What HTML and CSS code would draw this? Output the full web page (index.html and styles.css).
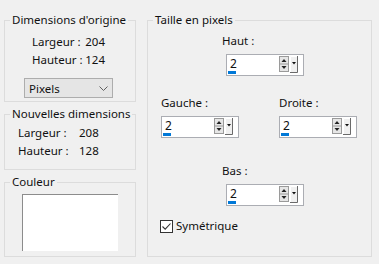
FILE: index.html
```html
<!DOCTYPE html>
<html lang="fr">
<head>
    <meta charset="UTF-8">
    <title>Ajouter des bordures</title>
    <link rel="stylesheet" href="styles.css">
</head>
<body>
    <div class="dialog">
        <div class="left">
            <fieldset class="group g-orig">
                <legend>Dimensions d'origine</legend>
                <div class="dim orig"><span>Largeur :</span><span>204</span></div>
                <div class="dim orig"><span>Hauteur :</span><span>124</span></div>
                <div class="combo">
                    <span>Pixels</span>
                    <svg width="9" height="5" viewBox="0 0 9 5"><path d="M0.5 0.5 L4.5 4.5 L8.5 0.5" fill="none" stroke="#606060" stroke-width="1"/></svg>
                </div>
            </fieldset>

            <fieldset class="group g-new">
                <legend>Nouvelles dimensions</legend>
                <div class="dim new"><span>Largeur :</span><span>208</span></div>
                <div class="dim new"><span>Hauteur :</span><span>128</span></div>
            </fieldset>

            <fieldset class="group g-color">
                <legend>Couleur</legend>
                <div class="swatch"></div>
            </fieldset>
        </div>

        <fieldset class="group g-size">
            <legend>Taille en pixels</legend>

            <div class="side top">
                <label>Haut :</label>
                <div class="spin"><span class="val">2</span><svg class="btns" width="20" height="17" viewBox="0 0 20 17"><rect x="0.5" y="0.5" width="9" height="15" fill="#e6e6e6" stroke="#9a9a9a"/><line x1="1" y1="8" x2="9" y2="8" stroke="#9a9a9a"/><path d="M2.5 6 L5 3 L7.5 6 Z" fill="#222"/><path d="M2.5 10 L5 13 L7.5 10 Z" fill="#222"/><rect x="11" y="0" width="8" height="17" fill="#f0f0f0"/><path d="M11.5 16.5 V0.5 H18.5" fill="none" stroke="#fff"/><path d="M11 16.5 H18.5 V0" fill="none" stroke="#6a6a6a"/><path d="M13 6 L17 6 L15 8.5 Z" fill="#111"/></svg><span class="bar"></span></div>
            </div>

            <div class="sides">
                <div class="side">
                    <label>Gauche :</label>
                    <div class="spin"><span class="val">2</span><svg class="btns" width="20" height="17" viewBox="0 0 20 17"><rect x="0.5" y="0.5" width="9" height="15" fill="#e6e6e6" stroke="#9a9a9a"/><line x1="1" y1="8" x2="9" y2="8" stroke="#9a9a9a"/><path d="M2.5 6 L5 3 L7.5 6 Z" fill="#222"/><path d="M2.5 10 L5 13 L7.5 10 Z" fill="#222"/><rect x="11" y="0" width="8" height="17" fill="#f0f0f0"/><path d="M11.5 16.5 V0.5 H18.5" fill="none" stroke="#fff"/><path d="M11 16.5 H18.5 V0" fill="none" stroke="#6a6a6a"/><path d="M13 6 L17 6 L15 8.5 Z" fill="#111"/></svg><span class="bar"></span></div>
                </div>
                <div class="side">
                    <label>Droite :</label>
                    <div class="spin"><span class="val">2</span><svg class="btns" width="20" height="17" viewBox="0 0 20 17"><rect x="0.5" y="0.5" width="9" height="15" fill="#e6e6e6" stroke="#9a9a9a"/><line x1="1" y1="8" x2="9" y2="8" stroke="#9a9a9a"/><path d="M2.5 6 L5 3 L7.5 6 Z" fill="#222"/><path d="M2.5 10 L5 13 L7.5 10 Z" fill="#222"/><rect x="11" y="0" width="8" height="17" fill="#f0f0f0"/><path d="M11.5 16.5 V0.5 H18.5" fill="none" stroke="#fff"/><path d="M11 16.5 H18.5 V0" fill="none" stroke="#6a6a6a"/><path d="M13 6 L17 6 L15 8.5 Z" fill="#111"/></svg><span class="bar"></span></div>
                </div>
            </div>

            <div class="side bottom">
                <label>Bas :</label>
                <div class="spin"><span class="val">2</span><svg class="btns" width="20" height="17" viewBox="0 0 20 17"><rect x="0.5" y="0.5" width="9" height="15" fill="#e6e6e6" stroke="#9a9a9a"/><line x1="1" y1="8" x2="9" y2="8" stroke="#9a9a9a"/><path d="M2.5 6 L5 3 L7.5 6 Z" fill="#222"/><path d="M2.5 10 L5 13 L7.5 10 Z" fill="#222"/><rect x="11" y="0" width="8" height="17" fill="#f0f0f0"/><path d="M11.5 16.5 V0.5 H18.5" fill="none" stroke="#fff"/><path d="M11 16.5 H18.5 V0" fill="none" stroke="#6a6a6a"/><path d="M13 6 L17 6 L15 8.5 Z" fill="#111"/></svg><span class="bar"></span></div>
            </div>

            <div class="check">
                <svg width="13" height="13" viewBox="0 0 13 13"><rect x="0.5" y="0.5" width="12" height="12" fill="#fff" stroke="#333"/><path d="M2.5 6.5 L5.2 9.2 L10.5 3.5" fill="none" stroke="#333" stroke-width="1.1"/></svg>
                <span>Symétrique</span>
            </div>
        </fieldset>
    </div>
</body>
</html>
```

FILE: styles.css
```css
body {
    margin: 0;
    background-color: #f0f0f0;
    font-family: "Noto Sans", sans-serif;
    font-size: 11.5px;
    color: #111;
}
.dialog {
    display: flex;
    gap: 11px;
    padding: 12px 0 0 4px;
}
.left {
    display: flex;
    flex-direction: column;
    gap: 4px;
    width: 132px;
}
.group {
    margin: 0;
    padding: 0;
    min-width: 0;
    border: 1px solid #dcdcdc;
}
.group legend {
    margin-left: 5px;
    padding: 0 2px;
    line-height: 16px;
}
.dim {
    display: flex;
    line-height: 16px;
    white-space: nowrap;
}
.dim.orig {
    width: 73px;
    margin-left: 27px;
    justify-content: space-between;
}
.dim.new {
    margin-left: 13px;
}
.dim.new span:first-child {
    width: 61px;
}
.g-orig {
    padding: 6px 0 3px;
}
.g-orig .dim + .dim {
    margin-top: 2px;
}
.combo {
    display: flex;
    align-items: center;
    justify-content: space-between;
    width: 89px;
    height: 20px;
    box-sizing: border-box;
    margin: 10px 0 0 19px;
    padding: 0 4px 0 4px;
    background: #e5e5e5;
    border: 1px solid #adadad;
}
.g-new {
    padding: 3px 0 10px;
}
.g-new .dim + .dim {
    margin-top: 2px;
}
.g-color {
    padding: 4px 0 5px;
}
.swatch {
    width: 96px;
    height: 57px;
    box-sizing: border-box;
    margin-left: 17px;
    background: #fff;
    border-top: 1px solid #8c8c8c;
    border-left: 1px solid #8c8c8c;
}
.g-size {
    width: 225px;
    box-sizing: border-box;
    padding: 5px 0 0;
}
.side label {
    display: block;
    line-height: 16px;
}
.side.top,
.side.bottom {
    padding-left: 74px;
}
.side.top .spin,
.side.bottom .spin {
    margin-left: 4px;
}
.side.bottom {
    margin-top: 25px;
}
.sides {
    display: flex;
    gap: 40px;
    margin-top: 19px;
    padding-left: 13px;
}
.spin {
    position: relative;
    display: flex;
    align-items: flex-start;
    width: 78px;
    height: 22px;
    box-sizing: border-box;
    margin-top: 5px;
    padding: 1px 4px 0 3px;
    background: #fff;
    border: 1px solid #abadb3;
}
.spin .val {
    flex: 1;
    line-height: 16px;
    font-size: 12px;
}
.spin .btns {
    display: block;
}
.spin .bar {
    position: absolute;
    left: 1px;
    bottom: 1px;
    width: 8px;
    height: 3px;
    background: #0078d7;
}
.check {
    display: flex;
    align-items: center;
    gap: 3px;
    margin: 12px 0 0 12px;
    line-height: 16px;
}
.check svg {
    display: block;
}
```
